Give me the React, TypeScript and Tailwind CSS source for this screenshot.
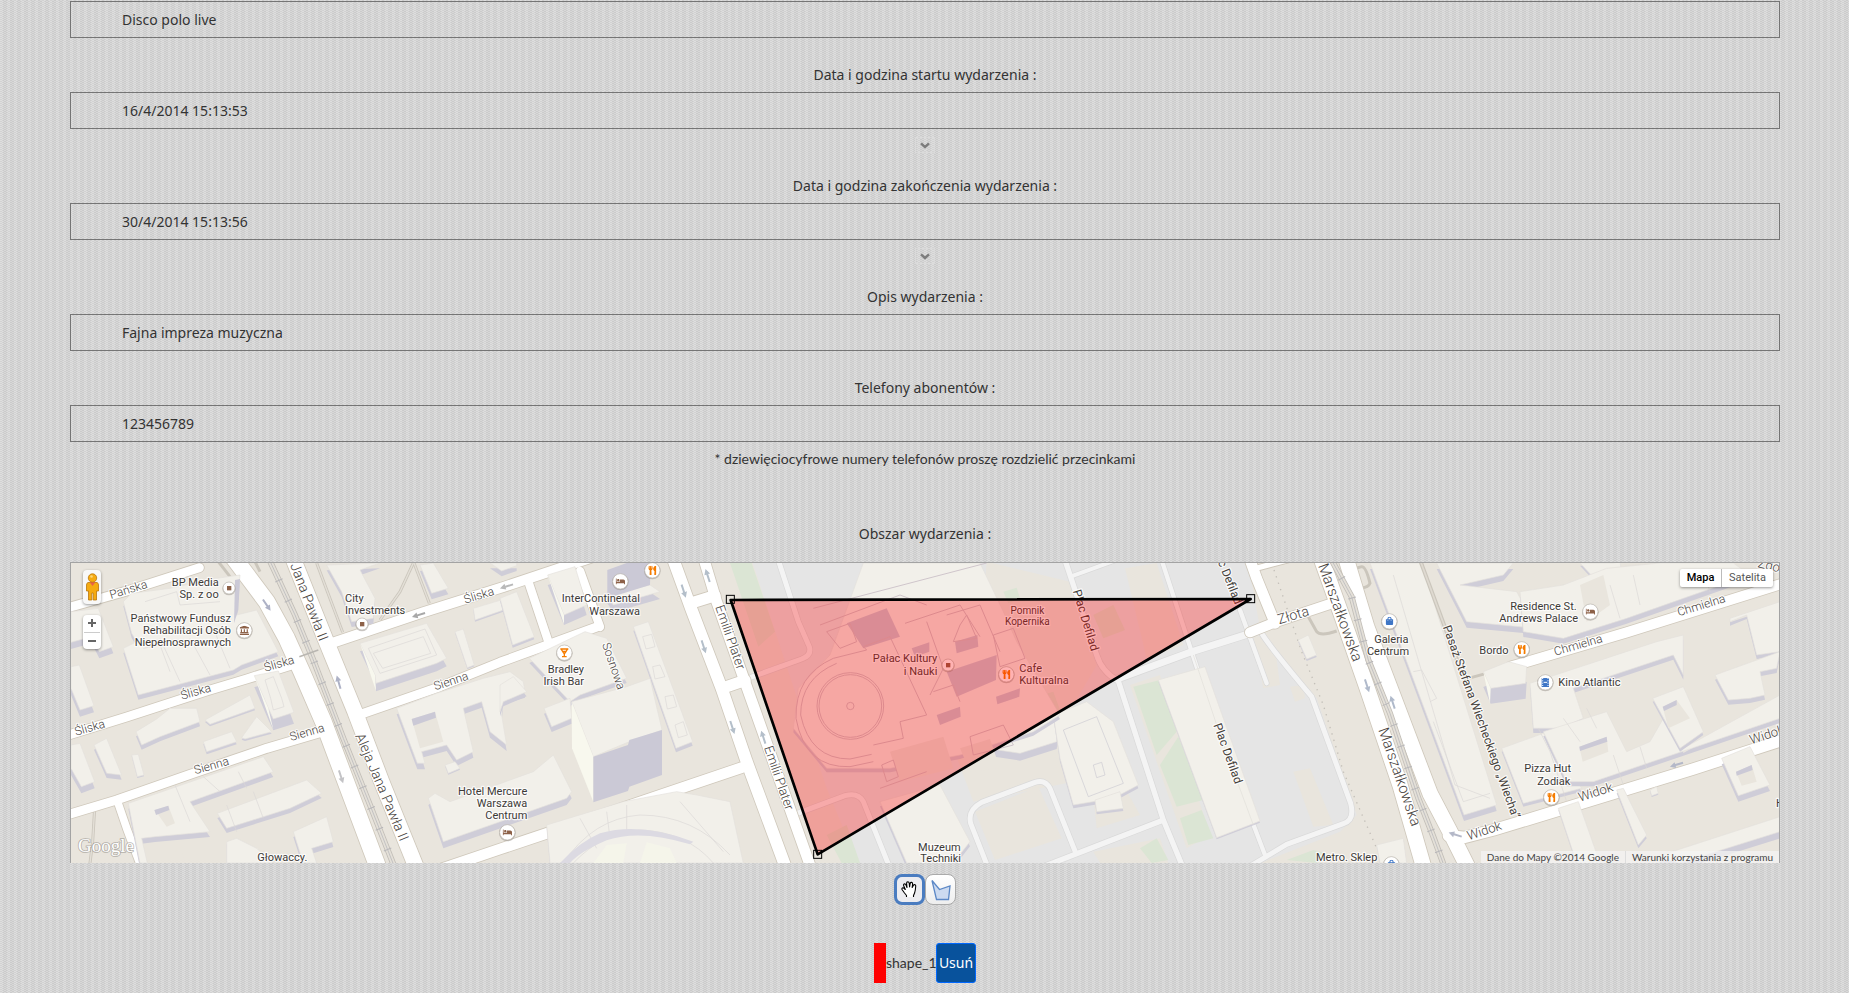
import React, { useState } from "react";
import { FaUtensils, FaBed, FaLandmark, FaShoppingBag } from "react-icons/fa";

type Road = { d: string; w: number };
type Building = { p: string; dy?: number };

/* Map drawing units: three per screen pixel. */
const whiteRoads: Road[] = [
  { d: "M0 165 L200 108 L418 38", w: 27 },
  { d: "M0 548 L200 486 L440 408 L560 372 L700 328", w: 27 },
  { d: "M0 786 L170 735 L400 655 L620 580 L790 530", w: 27 },
  { d: "M172 738 L200 820 L245 940", w: 23 },
  { d: "M515 0 L620 140 L680 250 L725 350 L790 500 L955 940", w: 50 },
  { d: "M695 0 L800 262 L885 470 L965 680 L1070 940", w: 46 },
  { d: "M805 268 L1090 172 L1330 96 L1600 6", w: 30 },
  { d: "M885 484 L1140 395 L1320 322 L1610 216", w: 27 },
  { d: "M1405 80 L1465 260", w: 25 },
  { d: "M1560 48 L1620 216", w: 25 },
  { d: "M1090 960 L1320 882 L1660 768 L2045 638", w: 32 },
  { d: "M1835 0 L1895 165 L1985 400 L2060 620 L2180 945", w: 36 },
  { d: "M1928 0 L1970 140 L2060 395 L2255 945", w: 32 },
  { d: "M1900 142 L1965 122", w: 34 },
  { d: "M1985 400 L2055 376", w: 34 },
  { d: "M3565 0 L3590 70 L3645 205", w: 32 },
  { d: "M3580 42 L3720 5", w: 16 },
  { d: "M3570 232 L3650 200 L3830 140", w: 30 },
  { d: "M3780 0 L3850 195 L3920 395 L4020 690 L4095 950", w: 46 },
  { d: "M3855 0 L3920 215 L4000 425 L4110 715 L4170 830 L4235 960", w: 46 },
  { d: "M4165 842 L4215 847 L4300 825 L4400 795 L4900 642 L5200 545", w: 34 },
  { d: "M4352 335 L4700 232 L5160 88", w: 30 },
];

const paleRoads: Road[] = [
  { d: "M2150 0 L2215 200 L2248 275 Q2256 300 2225 312 L2075 366", w: 15 },
  { d: "M2210 776 L2355 722 Q2395 712 2410 740 L2490 940", w: 15 },
  { d: "M3010 0 L3110 300 Q3125 350 3175 378 L3310 795 L3370 940", w: 16 },
  { d: "M3040 62 L3210 0", w: 12 },
  { d: "M3300 0 L3395 290 L3470 520 L3615 900", w: 13 },
  { d: "M3172 372 L3390 292 L3580 232", w: 21 },
  { d: "M3540 165 L3620 385", w: 13 },
  { d: "M3605 235 Q3625 270 3755 425 L3872 745 Q3885 795 3850 806 L3680 868 L3560 940", w: 15 },
  { d: "M2950 935 L3305 797", w: 16 },
  { d: "M2785 940 L2732 805 Q2722 765 2765 742 L2925 682 Q2955 672 2970 700 L3045 888", w: 15 },
];

const plaza = [
  "M2050 0 L3560 0 L3600 220 L3690 340 L3770 430 L3890 780 L3840 830 L3560 940 L2300 940 L2190 640 Z",
];

const beige = [
  "M2050 0 L2070 0 L2300 700 L2400 940 L2240 940 L1980 120 Z",
  "M2780 20 L3030 80 L3110 330 L3000 520 L2760 300 Z",
  "M2650 500 L3000 560 L3040 680 L2740 740 Z",
  "M2745 770 L2935 695 L3005 850 L2805 915 Z",
  "M3195 40 L3290 24 L3370 270 L3260 310 Z",
  "M3580 245 L3640 240 L3660 390 L3610 400 Z",
  "M3700 650 L3750 640 L3820 810 L3760 815 Z",
  "M3100 720 L3190 690 L3240 780 L3110 820 Z",
  "M3210 390 L3300 360 L3450 840 L3380 880 Z",
  "M3100 890 L3300 850 L3330 940 L3130 940 Z",
  "M3690 395 L3730 390 L3735 430 L3705 440 Z",
];

const greens = [
  "M2010 24 L2075 24 L2145 230 L2095 275 Z",
  "M2300 840 L2360 810 L2400 924 L2345 924 Z",
  "M3220 395 L3300 375 L3350 530 L3290 600 Z",
  "M3300 630 L3355 545 L3430 735 L3350 755 Z",
  "M3360 790 L3425 765 L3460 850 L3385 870 Z",
  "M2830 110 L2870 98 L2880 130 L2845 145 Z",
  "M3100 180 L3160 150 L3195 225 L3130 250 Z",
  "M2945 420 L2980 410 L3000 465 L2965 475 Z",
  "M3240 880 L3290 850 L3325 915 L3275 924 Z",
  "M3680 915 L3760 885 L3800 895 L3770 924 Z",
];

const buildings: Building[] = [
  { p: "33,170 115,160 160,275 118,290 95,245 33,262", dy: 20 },
  { p: "33,335 58,330 102,452 60,465 33,400", dy: 20 },
  { p: "33,570 60,565 104,680 64,695 33,640", dy: 20 },
  { p: "190,140 215,115 330,100 470,70 540,60 530,180 590,165 655,290 545,330 520,345 235,420 190,280 230,260 215,235", dy: 14 },
  { p: "435,495 570,420 585,460 450,508", dy: 6 },
  { p: "228,530 290,492 330,460 410,460 420,500 300,545 245,570", dy: 14 },
  { p: "430,560 515,530 530,560 440,590", dy: 8 },
  { p: "545,548 590,485 635,530 555,552", dy: 6 },
  { p: "583,362 655,348 702,472 640,492 625,460", dy: 34 },
  { p: "102,570 140,550 185,660 140,655", dy: 14 },
  { p: "215,600 235,598 252,660 232,665", dy: 4 },
  { p: "205,745 610,605 640,650 390,740 450,830 285,845 245,850 262,924 240,924", dy: 16 },
  { p: "472,775 740,675 785,715 690,760 500,820", dy: 14 },
  { p: "500,860 530,850 590,880 640,924 500,924", dy: 8 },
  { p: "700,830 800,785 820,860 755,880 770,924 730,924", dy: 16 },
  { p: "800,30 960,24 900,45 945,130 940,190 875,200 845,110", dy: 16 },
  { p: "1080,30 1120,24 1165,100 1115,115", dy: 18 },
  { p: "1290,24 1370,24 1370,32 1325,48", dy: 16 },
  { p: "1240,160 1340,130 1345,160 1245,195", dy: 5 },
  { p: "900,265 1100,205 1160,310 1130,325 948,385 945,360", dy: 24 },
  { p: "1185,230 1210,222 1243,330 1222,338", dy: 4 },
  { p: "1010,460 1130,415 1270,370 1350,350 1390,380 1395,410 1330,430 1325,480 1340,570 1290,530 1265,440 1210,460 1240,590 1190,615 1160,570 1085,590 1095,625 1072,625", dy: 18 },
  { p: "1155,630 1185,620 1200,640 1165,655", dy: 4 },
  { p: "1105,730 1125,715 1170,740 1420,650 1480,600 1535,710 1520,730 1150,860", dy: 20 },
  { p: "1463,60 1545,35 1580,150 1512,180", dy: 30 },
  { p: "1320,130 1370,110 1423,245 1358,270", dy: 8 },
  { p: "1640,120 1770,90 1800,110 1660,150", dy: 22 },
  { p: "1720,215 1765,200 1898,560 1848,580", dy: 12 },
  { p: "1408,310 1575,230 1640,250 1700,370 1560,420 1530,440", dy: 14 },
  { p: "1320,390 1360,365 1400,410 1330,440 1320,470", dy: 14 },
  { p: "1452,460 1530,430 1535,490 1475,515", dy: 16 },
  { p: "1460,810 1690,740 1850,710 1910,720 2010,740 2050,924 1470,924", dy: 8 },
  { p: "2650,560 2860,520 3000,500 2990,560 2880,595", dy: 22 },
  { p: "2980,480 3080,440 3160,500 3235,690 3160,730 3040,750 3000,610", dy: 10 },
  { p: "3105,735 3180,710 3190,760 3110,770", dy: 8 },
  { p: "2460,740 2640,690 2730,860 2680,924 2540,924", dy: 14 },
  { p: "3295,375 3435,335 3600,798 3470,848", dy: 5 },
  { p: "3715,255 3745,240 3770,300 3740,312", dy: 6 },
  { p: "4560,24 4660,24 4680,20 4690,90 4590,180 4640,110", dy: 8 },
  { p: "3930,24 4085,24 4310,750 4212,780", dy: 18 },
  { p: "4130,24 4360,24 4330,60 4200,90 4370,110 4430,220 4220,200", dy: 18 },
  { p: "4510,90 4640,40 4800,24 5020,24 5070,60 4870,130 4700,190 4510,250 4390,230 4380,110", dy: 16 },
  { p: "5010,190 5160,140 5160,290 5090,300 5060,180 5010,200", dy: 12 },
  { p: "4270,350 4345,320 4400,335 4397,385 4292,400", dy: 46 },
  { p: "4410,385 4790,260 4870,240 4870,360 4840,300 4540,400 4570,490 4500,520 4420,520", dy: 14 },
  { p: "4325,580 4450,535 4565,700 4390,745", dy: 10 },
  { p: "4450,530 4640,470 4700,590 4770,560 4850,420 4870,580 5160,420 5160,490 4600,680 4520,680", dy: 14 },
  { p: "4778,430 4870,395 4930,530 4860,580", dy: 10 },
  { p: "4965,360 5160,290 5150,340 5100,350 5115,420 5070,430 5005,435", dy: 14 },
  { p: "4985,610 5070,575 5130,690 5035,722", dy: 18 },
  { p: "4495,760 4555,740 4620,924 4550,924", dy: 6 },
  { p: "4670,705 4690,700 4760,840 4735,870", dy: 10 },
  { p: "4770,705 4790,695 4795,715 4775,722", dy: 4 },
  { p: "4790,905 5160,785 5160,830 4860,924", dy: 20 },
  { p: "3950,870 4030,850 4040,924 3960,924", dy: 4 },
  { p: "2410,24 2760,24 2830,170 2870,260 3000,480 2920,530 2700,600 2490,640 2300,640 2200,520 2215,400 2310,300", dy: 12 },
];

const courtyards = [
  "M285 765 L325 752 L345 805 L320 815 Z",
  "M1055 492 L1125 470 L1150 560 L1080 580 Z",
  "M4558 575 L4640 545 L4645 590 L4568 620 Z",
  "M4808 455 L4850 435 L4890 490 L4825 520 Z",
  "M5028 650 L5075 630 L5090 680 L5045 692 Z",
  "M350 885 L365 875 L370 910 L335 910 Z",
  "M4560 90 L4630 60 L4650 150 L4580 200 Z",
];

const shadows = [
  "M525 75 L540 72 L535 165 L522 205 Z",
  "M1055 492 L1125 470 L1128 488 L1060 512 Z",
  "M283 765 L325 752 L328 765 L288 780 Z",
  "M1642 45 L1700 24 L1772 24 L1770 90 L1642 130 Z",
  "M4558 575 L4640 545 L4642 560 L4560 588 Z",
  "M4808 455 L4850 435 L4850 450 L4812 468 Z",
  "M5028 650 L5075 630 L5078 645 L5030 662 Z",
  "M2360 205 L2480 160 L2520 245 L2410 280 Z",
  "M2660 350 L2810 300 L2808 375 L2690 425 Z",
  "M2685 260 L2752 240 L2755 275 L2690 295 Z",
  "M2555 280 L2608 262 L2608 290 L2565 305 Z",
  "M2808 425 L2880 400 L2878 425 L2812 448 Z",
  "M2630 480 L2700 455 L2702 485 L2640 510 Z",
];

type MapText = { t: string; x: number; y: number; r?: number; s?: number; w?: number; a?: "start" | "middle" | "end"; c?: string };

const streets: MapText[] = [
  { t: "Pańska", x: 153, y: 132, r: -17 },
  { t: "Śliska", x: 366, y: 434, r: -16 },
  { t: "Śliska", x: 616, y: 350, r: -16 },
  { t: "Śliska", x: 48, y: 542, r: -16 },
  { t: "Sienna", x: 693, y: 558, r: -16 },
  { t: "Sienna", x: 406, y: 658, r: -16 },
  { t: "Śliska", x: 1216, y: 146, r: -17 },
  { t: "Sienna", x: 1126, y: 406, r: -18 },
  { t: "Jana Pawła II", x: 690, y: 30, r: 69, s: 42 },
  { t: "Aleja Jana Pawła II", x: 885, y: 542, r: 67, s: 42 },
  { t: "Sosnowa", x: 1626, y: 268, r: 71 },
  { t: "Emilii Plater", x: 1966, y: 156, r: 71, s: 39 },
  { t: "Emilii Plater", x: 2112, y: 578, r: 71, s: 39 },
  { t: "Plac Defilad", x: 3038, y: 108, r: 73, w: 400 },
  { t: "Plac Defilad", x: 3460, y: 510, r: 70, w: 400 },
  { t: "Plac Defilad", x: 3454, y: -26, r: 68, w: 400 },
  { t: "Złota", x: 3658, y: 208, r: -17, s: 42 },
  { t: "Marszałkowska", x: 3774, y: 32, r: 70, s: 45 },
  { t: "Marszałkowska", x: 3955, y: 524, r: 71, s: 45 },
  { t: "Pasaż Stefana Wiecheckiego „Wiecha”", x: 4148, y: 216, r: 70, w: 400 },
  { t: "Chmielna", x: 4486, y: 302, r: -16 },
  { t: "Chmielna", x: 4856, y: 184, r: -17 },
  { t: "Widok", x: 4226, y: 856, r: -18, s: 39 },
  { t: "Widok", x: 4560, y: 740, r: -18, s: 39 },
  { t: "Widok", x: 5074, y: 568, r: -18, s: 39 },
  { t: "Zgoda", x: 5092, y: 36, r: 14, s: 39 },
];

const places: MapText[] = [
  { t: "BP Media", x: 476, y: 93, a: "end" },
  { t: "Sp. z oo", x: 476, y: 129, a: "end" },
  { t: "Państwowy Fundusz", x: 513, y: 200, a: "end" },
  { t: "Rehabilitacji Osób", x: 513, y: 236, a: "end" },
  { t: "Niepełnosprawnych", x: 513, y: 272, a: "end" },
  { t: "City", x: 855, y: 140 },
  { t: "Investments", x: 855, y: 176 },
  { t: "InterContinental", x: 1740, y: 140, a: "end" },
  { t: "Warszawa", x: 1740, y: 179, a: "end" },
  { t: "Bradley", x: 1572, y: 353, a: "end" },
  { t: "Irish Bar", x: 1572, y: 389, a: "end" },
  { t: "Hotel Mercure", x: 1402, y: 719, a: "end" },
  { t: "Warszawa", x: 1402, y: 755, a: "end" },
  { t: "Centrum", x: 1402, y: 791, a: "end" },
  { t: "Głowaccy.", x: 592, y: 917 },
  { t: "Pałac Kultury", x: 2632, y: 320, a: "end" },
  { t: "i Nauki", x: 2632, y: 359, a: "end" },
  { t: "Pomnik", x: 2902, y: 176, a: "middle", s: 30 },
  { t: "Kopernika", x: 2902, y: 209, a: "middle", s: 30 },
  { t: "Cafe", x: 2878, y: 350 },
  { t: "Kulturalna", x: 2878, y: 386 },
  { t: "Muzeum", x: 2638, y: 887, a: "middle" },
  { t: "Techniki", x: 2642, y: 921, a: "middle" },
  { t: "Metro. Sklep", x: 3768, y: 918 },
  { t: "Galeria", x: 3994, y: 263, a: "middle" },
  { t: "Centrum", x: 3984, y: 299, a: "middle" },
  { t: "Residence St.", x: 4550, y: 164, a: "end" },
  { t: "Andrews Palace", x: 4554, y: 200, a: "end" },
  { t: "Bordo", x: 4258, y: 296 },
  { t: "Kino Atlantic", x: 4495, y: 392 },
  { t: "Pizza Hut", x: 4533, y: 650, a: "end" },
  { t: "Zodiak", x: 4531, y: 689, a: "end" },
  { t: "H", x: 5148, y: 756 },
];

type Kind = "dot" | "fork" | "bed" | "museum" | "bar" | "film" | "bag";
const pins: { k: Kind; x: number; y: number }[] = [
  { k: "dot", x: 507, y: 99 },
  { k: "museum", x: 553, y: 226 },
  { k: "dot", x: 906, y: 207 },
  { k: "bed", x: 1681, y: 79 },
  { k: "fork", x: 1777, y: 46 },
  { k: "bar", x: 1513, y: 293 },
  { k: "bed", x: 1342, y: 832 },
  { k: "dot", x: 2664, y: 330 },
  { k: "fork", x: 2839, y: 358 },
  { k: "bag", x: 3988, y: 199 },
  { k: "bed", x: 4591, y: 170 },
  { k: "fork", x: 4385, y: 283 },
  { k: "film", x: 4456, y: 382 },
  { k: "fork", x: 4474, y: 727 },
  { k: "bag", x: 3994, y: 928 },
];

const arrows = [
  { x: 620, y: 150, r: 56, c: "#aeb2c6" },
  { x: 836, y: 382, r: 254, c: "#aeb2c6" },
  { x: 843, y: 665, r: 72, c: "#c3c3c6" },
  { x: 1076, y: 180, r: 163, c: "#a8a8a8" },
  { x: 1340, y: 94, r: 163, c: "#b9b9b9" },
  { x: 1943, y: 62, r: 252, c: "#b4bfca" },
  { x: 1871, y: 108, r: 72, c: "#b4bfca" },
  { x: 1931, y: 275, r: 72, c: "#b4bfca" },
  { x: 2017, y: 517, r: 72, c: "#b4bfca" },
  { x: 2110, y: 547, r: 252, c: "#b4bfca" },
  { x: 3921, y: 392, r: 72, c: "#b0bacb" },
  { x: 3998, y: 442, r: 252, c: "#b0bacb" },
  { x: 4850, y: 629, r: 163, c: "#b4b8c8" },
  { x: 4186, y: 839, r: 197, c: "#b4b8c8" },
];

function Glyph({ k }: { k: Kind }) {
  switch (k) {
    case "fork":
      return <FaUtensils x={-14} y={-14} size={28} color="#f57c00" />;
    case "bed":
      return <FaBed x={-14} y={-14} size={28} color="#8d6148" />;
    case "museum":
      return <FaLandmark x={-14} y={-14} size={28} color="#8d6148" />;
    case "bag":
      return <FaShoppingBag x={-12} y={-14} size={25} color="#3f76c6" />;
    case "bar":
      return (
        <g fill="none" stroke="#f57c00" strokeWidth="4">
          <path d="M-12 -11 H12 M-9 -10 L-2 1 H2 L9 -10 M-7 -4 H7 M0 0 V12 M-7 12 H7" />
        </g>
      );
    case "film":
      return (
        <g>
          <rect x="-11" y="-13" width="22" height="27" fill="#3f76c6" />
          <path d="M-8 -13 V14 M8 -13 V14" stroke="#fff" strokeWidth="3" strokeDasharray="3 4" />
          <path d="M-5 0 H5" stroke="#fff" strokeWidth="3" />
        </g>
      );
    default:
      return <rect x="-6" y="-6" width="13" height="13" fill="#8d6148" />;
  }
}

function Pin({ k, x, y }: { k: Kind; x: number; y: number }) {
  return (
    <g transform={`translate(${x} ${y})`}>
      <circle r={k === "dot" ? 20 : 25} cy={2} fill="#8d8880" opacity=".45" />
      <circle r={k === "dot" ? 18 : 23} fill="#fff" stroke="#bdb8b0" strokeWidth="2" />
      <Glyph k={k} />
    </g>
  );
}

function Label({ t, x, y, r = 0, s = 36, w = 400, a = "start", c = "#444" }: MapText) {
  return (
    <text
      transform={`translate(${x} ${y}) rotate(${r})`}
      fontSize={s}
      fontWeight={w}
      textAnchor={a}
      fill={c}
      stroke="#fff"
      strokeOpacity=".8"
      strokeWidth="7"
      strokeLinejoin="round"
      paintOrder="stroke"
    >
      {t}
    </text>
  );
}

function Track({ d }: { d: string }) {
  return (
    <g fill="none">
      <path d={d} stroke="#c2beb8" strokeWidth="18" />
      <path d={d} stroke="#e4e0d8" strokeWidth="13" />
      <path d={d} stroke="#c2c1c2" strokeWidth="3" />
      <path d={d} stroke="#b9b8ba" strokeWidth="24" strokeDasharray="3 64" />
    </g>
  );
}

function CityMap() {
  return (
    <svg
      viewBox="33 24 5124 900"
      preserveAspectRatio="xMidYMid slice"
      className="block h-full w-full font-['Roboto',sans-serif]"
      role="img"
      aria-label="Mapa"
    >
      <rect x="-2000" y="-1000" width="9000" height="3000" fill="#e9e5dd" />
      <g fill="#e5e5e5">{plaza.map((d) => <path key={d} d={d} />)}</g>
      <g fill="#e9e5dd">{beige.map((d) => <path key={d} d={d} />)}</g>
      <g fill="#dbe5d4">{greens.map((d) => <path key={d} d={d} />)}</g>

      <g fill="none" stroke="#cbc6bc" strokeWidth="9">
        <path d="M104 760 L98 860 L88 940" />
        <path d="M1060 24 L1020 110 L960 195" />
        <path d="M1062 24 L1108 145" />
        <path d="M770 24 L848 232" />
        <path d="M585 20 L600 50" />
        <path d="M475 20 L510 65" />
        <path d="M4225 370 L4290 352" />
        <path d="M3745 185 L3770 230 Q3782 245 3830 228" />
        <path d="M3880 42 L3905 35 Q3918 34 3930 85 Q3925 98 3905 98 Z" />
      </g>
      <g fill="none" stroke="#e4e0d8" strokeWidth="4">
        <path d="M104 760 L98 860 L88 940" />
        <path d="M1060 24 L1020 110 L960 195" />
        <path d="M1062 24 L1108 145" />
        <path d="M770 24 L848 232" />
      </g>

      <g fill="none" strokeLinecap="round" strokeLinejoin="round">
        {paleRoads.map((r) => <path key={r.d} d={r.d} stroke="#d9d9d9" strokeWidth={r.w + 4} />)}
        {paleRoads.map((r) => <path key={r.d + "f"} d={r.d} stroke="#f4f4f4" strokeWidth={r.w} />)}
        {whiteRoads.map((r) => <path key={r.d} d={r.d} stroke="#cfc8bb" strokeWidth={r.w + 5} />)}
        {whiteRoads.map((r) => <path key={r.d + "f"} d={r.d} stroke="#fff" strokeWidth={r.w} />)}
      </g>

      <path d="M3642 45 L3725 290 L3790 450 L3850 650 L3950 880" fill="none" stroke="#c3bfb8" strokeWidth="4" strokeDasharray="4 16" />
      <Track d="M628 14 L705 180 L758 310 L850 550 L930 750 L1005 940" />
      <Track d="M3812 10 L3875 125 L3925 315 L3990 475 L4075 730 L4120 845 L4155 940" />
      <path d="M718 305 L775 285" stroke="#b9b6b1" strokeWidth="5" />

      <g>
        {buildings.map((b) => (
          <g key={b.p}>
            <polygon points={b.p} fill="#cfcdd8" transform={`translate(0 ${b.dy ?? 14})`} />
            <polygon points={b.p} fill="#f2f0ea" stroke="#e4e1dc" strokeWidth="2" />
          </g>
        ))}
      </g>
      <path d="M4082 20 L4230 420" fill="none" stroke="#cbc6bc" strokeWidth="12" />
      <path d="M4082 20 L4230 420" fill="none" stroke="#dfdad1" strokeWidth="5" />
      <g fill="#e9e5dd">{courtyards.map((d) => <path key={d} d={d} />)}</g>
      <g fill="#cbc9d6">{shadows.map((d) => <path key={d} d={d} />)}</g>
      <path d="M2700 580 L2790 552 L2820 640 L2730 650 Z M2490 590 L2650 545 L2680 640 L2520 680 Z" fill="#e9e5dd" />

      <g>
        <path d="M1535 440 L1700 395 L1770 370 L1806 525 L1708 560 L1600 605 Z" fill="#f2f0ea" stroke="#e4e1dc" strokeWidth="2" />
        <path d="M1535 440 L1600 605 L1600 740 L1536 580 Z" fill="#f8f8ee" />
        <path d="M1600 605 L1704 570 L1708 555 L1806 525 L1806 660 L1708 695 L1704 708 L1600 742 Z" fill="#cbc9d6" />
      </g>
      <path d="M1463 60 L1512 180 L1512 208 Z M4270 350 L4292 400 L4290 445 Z M900 265 L945 360 L948 408 Z M583 362 L625 460 L640 524 Z" fill="#f8f8ee" />

      <g fill="none" stroke="#dbd8d6" strokeWidth="2">
        <path d="M925 280 L1095 222 L1130 300 L960 355 Z M940 295 L1090 245 L1112 295 L968 340 Z" />
        <path d="M255 140 L350 110 L360 150 L480 140 M250 280 L300 270 L330 350 M390 250 L450 360 M300 250 L360 380 M460 220 L510 340" />
        <path d="M615 375 L640 365 L665 430 L672 455 L640 465 L632 430 Z M345 690 L390 800 M430 665 L480 710 M535 650 L560 700 M580 710 L610 790 M500 750 L530 830" />
        <path d="M1748 245 L1775 238 L1785 275 L1758 282 Z M1778 335 L1800 330 L1815 365 L1785 372 Z M1815 425 L1840 420 L1850 455 L1822 462 Z M1845 510 L1870 500 L1882 540 L1855 548 Z" />
        <path d="M1510 924 Q1600 790 1740 780 Q1900 780 2010 900 M1540 924 Q1630 830 1740 825 Q1880 830 1960 924 M1560 790 L1610 880 M1640 770 L1650 850 M1700 750 L1700 840 M1860 740 L1990 890" />
        <path d="M3010 525 L3110 485 L3190 685 L3085 725 Z M3100 630 L3125 622 L3135 660 L3110 668 Z" stroke="#cccad2" />
        <path d="M4000 60 L4185 690 L4290 730 M4060 350 L4085 345 L4130 430 L4110 440 M4120 500 L4210 740 L4290 715" />
        <path d="M4435 520 L4470 590 L4520 740 M4510 490 L4560 560 M4580 460 L4610 520 M4660 600 L4690 690 M4740 575 L4760 640 M4650 90 L4680 190 M4720 60 L4740 150 M4930 50 L4950 110" />
        <path d="M3400 300 L3480 540 L3580 810" stroke="#e1dfda" />
      </g>
      <path d="M1500 924 Q1560 860 1620 835 Q1740 800 1900 860 L1890 868 Q1740 822 1640 856 Q1560 890 1530 924 Z" fill="#dcdae2" />
      <path d="M1600 924 L1640 870 L1700 865 L1690 924 Z M1740 924 L1760 862 L1830 880 L1850 924 Z" fill="#f5f5ea" />
      <g fill="none" stroke="#cfc5cb" strokeWidth="3">
        <circle cx="2371" cy="453" r="100" />
        <circle cx="2371" cy="453" r="94" />
        <circle cx="2371" cy="453" r="11" />
        <path d="M2320 310 Q2205 360 2208 490 Q2235 640 2370 635 L2440 620" />
        <path d="M2330 325 Q2222 370 2222 480 Q2250 612 2370 612 L2435 598" />
        <path d="M2320 310 L2420 285 L2410 275 L2490 245 L2600 480 L2520 500 L2530 550 L2440 570" />
        <path d="M2260 160 L2780 24 M2280 210 L2520 120 L2600 150 M2300 230 L2340 280 L2390 260 L2370 205 Z M2535 205 L2700 150 L2760 245 M2600 200 L2650 340 L2610 420 M2660 180 L2760 150 L2820 290" />
        <path d="M2800 240 L2860 220 L2895 310 L2820 335 Z M2620 410 L2680 390 L2700 440 M2730 545 L2830 510 L2860 570 L2740 600 Z M2465 630 L2500 615 L2515 665 L2480 680 Z M2460 700 L2600 650 M2700 210 L2680 260 L2750 250 L2720 180 Z" />
      </g>

      {arrows.map((a) => (
        <g key={`${a.x}-${a.y}`} transform={`translate(${a.x} ${a.y}) rotate(${a.r})`} fill={a.c}>
          <path d="M-20 -3 H4 V-9 L21 0 L4 9 V3 H-20 Z" />
        </g>
      ))}

      {streets.map((s) => <Label key={`${s.t}${s.x}`} w={300} {...s} c="#46413b" />)}
      {places.map((s) => <Label key={`${s.t}${s.x}${s.y}`} s={33} {...s} c="#3d3a37" />)}
      {pins.map((p) => <Pin key={`${p.x}-${p.y}`} {...p} />)}

      <polygon points="2012,135 3572,132 2273,898" fill="#f00" fillOpacity=".3" stroke="#000" strokeWidth="8" strokeLinejoin="round" />
      <g fill="none" stroke="#000" strokeWidth="3">
        <rect x="1999" y="121" width="24" height="24" />
        <rect x="3560" y="119" width="24" height="24" />
        <rect x="2261" y="886" width="24" height="24" />
      </g>

      <text x="54" y="892" fontSize="57" className="font-['Liberation_Serif',serif]" fill="#fff" stroke="#8f8b85" strokeOpacity=".6" strokeWidth="5" paintOrder="stroke">
        Google
      </text>
    </svg>
  );
}

function Pegman() {
  return (
    <svg viewBox="0 0 13 28" className="h-7 w-[13px]" aria-hidden="true">
      <path d="M2 9.5 H11 Q12.5 10 12.5 12 V18 H10.5 V27 H7.2 V20 H5.8 V27 H2.5 V18 H.5 V12 Q.5 10 2 9.5 Z" fill="#f5ab12" stroke="#b9760b" strokeWidth=".8" />
      <path d="M3.5 9 H9.5 L6.5 13 Z" fill="#e8604c" />
      <circle cx="6.5" cy="5" r="4.2" fill="#f5ab12" stroke="#b9760b" strokeWidth=".8" />
      <circle cx="5.5" cy="3.5" r="1.3" fill="#fbd67a" />
    </svg>
  );
}

function Field({ id, label, value, first = false, picker = false, tight = false }: {
  id: string; label?: string; value: string; first?: boolean; picker?: boolean; tight?: boolean;
}) {
  const [v, setV] = useState(value);
  return (
    <div className={first ? "pt-px" : tight ? "pt-[23px]" : "pt-[27px]"}>
      {label && (
        <label htmlFor={id} className="mb-[7px] block text-center leading-5">{label}</label>
      )}
      <input
        id={id}
        aria-label={label ? undefined : "Nazwa wydarzenia"}
        value={v}
        onChange={(e) => setV(e.target.value)}
        className="block h-[37px] w-full border border-[#757575] bg-transparent px-[51px] outline-none"
      />
      {picker && (
        <button type="button" aria-label="Wybierz datę" className="mx-auto mt-2 flex h-4 w-5 items-end justify-center border border-[#dadada] pb-[3px]">
          <svg viewBox="0 0 10 7" className="h-[7px] w-2.5" aria-hidden="true">
            <path d="M1 1.3 L5 5 L9 1.3" fill="none" stroke="#7d7d7d" strokeWidth="2.4" />
          </svg>
        </button>
      )}
    </div>
  );
}

export default function App() {
  return (
    <main className="min-h-screen bg-[#d2d2d2] bg-[linear-gradient(90deg,#ffffff24_50%,transparent_50%),repeating-conic-gradient(#cbcbcb_0_25%,#d8d8d8_0_50%)] bg-[size:7px_7px,4px_2px] pl-[70px] pr-[69px] font-['Noto_Sans',sans-serif] text-sm text-[#333]">
      <form onSubmit={(e) => e.preventDefault()}>
        <Field id="name" value="Disco polo live" first />
        <Field id="start" label="Data i godzina startu wydarzenia :" value="16/4/2014 15:13:53" picker />
        <Field id="end" label="Data i godzina zakończenia wydarzenia :" value="30/4/2014 15:13:56" picker tight />
        <Field id="desc" label="Opis wydarzenia :" value="Fajna impreza muzyczna" tight />
        <Field id="phones" label="Telefony abonentów :" value="123456789" />
        <p className="mt-[7px] text-center font-['Lato',sans-serif] leading-5">
          * dziewięciocyfrowe numery telefonów proszę rozdzielić przecinkami
        </p>

        <h2 className="mt-[55px] text-center leading-5">Obszar wydarzenia :</h2>
        <section className="relative mt-[18px] h-[301px] overflow-hidden border border-b-0 border-[#a3a3a3]">
          <CityMap />
          <button type="button" aria-label="Street View" className="absolute left-3 top-[7px] flex h-[34px] w-[18px] items-center justify-center rounded-sm bg-[#f8f8f8] shadow-[0_1px_3px_#0006]">
            <Pegman />
          </button>
          <div className="absolute left-3 top-[52px] flex h-[34px] w-[18px] flex-col rounded-sm bg-white px-px shadow-[0_1px_3px_#0006]">
            <button type="button" aria-label="Powiększ" className="flex flex-1 items-center justify-center border-b border-[#ccc]">
              <svg viewBox="0 0 8 8" className="size-2" aria-hidden="true"><path d="M4 0V8M0 4H8" stroke="#666" strokeWidth="2" /></svg>
            </button>
            <button type="button" aria-label="Pomniejsz" className="flex flex-1 items-center justify-center">
              <svg viewBox="0 0 8 8" className="size-2" aria-hidden="true"><path d="M0 4H8" stroke="#666" strokeWidth="2" /></svg>
            </button>
          </div>
          <div className="absolute right-[6px] top-[6px] flex h-[18px] rounded-xs bg-white font-['Roboto',sans-serif] text-[11px] leading-[18px] shadow-[0_1px_3px_#0006]">
            <button type="button" className="w-[42px] border-r border-[#bbb] font-medium text-black">Mapa</button>
            <button type="button" className="w-[51px] text-[#565656]">Satelita</button>
          </div>
          <div className="absolute bottom-0 right-0 flex h-3 bg-[#f5f5f5b3] font-['Lato',sans-serif] text-[10px] leading-3 text-[#444]">
            <span className="px-[6px]">Dane do Mapy ©2014 Google</span>
            <a href="#warunki" className="border-l border-[#ddd] px-[6px]">Warunki korzystania z programu</a>
          </div>
        </section>

        <div className="mt-[11px] flex justify-center">
          <button type="button" aria-label="Przesuwaj mapę" className="flex size-[31px] items-center justify-center rounded-lg border-[3px] border-[#4a7cc0] bg-[#ececf0]">
            <svg viewBox="0 0 17 17" className="size-[17px]" aria-hidden="true">
              <path d="M5.5 16 V14.5 L3.5 12 L1 8.5 Q.6 7 2 6.8 Q3 7 4 8.3 L4.3 8.5 L2.6 4.5 Q2.3 3 3.5 2.7 Q4.6 2.7 5 4 L6 6.5 L5.6 2.3 Q5.6 .9 6.8 .8 Q8 .8 8.2 2.2 L8.6 6 L9.2 2.2 Q9.6 1.2 10.6 1.4 Q11.7 1.7 11.6 3 L11.2 6.5 L12.5 4.2 Q13.2 3.3 14.2 3.8 Q15 4.5 14.7 5.5 L14.3 9 L13.6 12 L12.5 14.5 V16" fill="#fff" stroke="#000" strokeWidth="1.1" strokeLinejoin="round" />
            </svg>
          </button>
          <button type="button" aria-label="Rysuj kształt" className="flex size-[31px] items-center justify-center rounded-lg border border-[#aaa] bg-linear-to-b from-white to-[#eee]">
            <svg viewBox="0 0 20 22" className="h-[22px] w-5" aria-hidden="true">
              <path d="M1 1.5 L8.5 10.5 L19 7 L17.5 20.5 L5.5 20.5 Z" fill="#ccdaf0" stroke="#5c88c6" strokeWidth="1.3" />
            </svg>
          </button>
        </div>

        <div className="mt-[38px] flex h-10 items-center justify-center">
          <span className="h-10 w-3 bg-[#f00]" />
          <span className="w-[50px] font-['Lato',sans-serif] leading-5">shape_1</span>
          <button type="button" className="size-10 rounded-[3px] border border-[#0068ff] bg-[#08529c] text-white">Usuń</button>
        </div>
      </form>
    </main>
  );
}
